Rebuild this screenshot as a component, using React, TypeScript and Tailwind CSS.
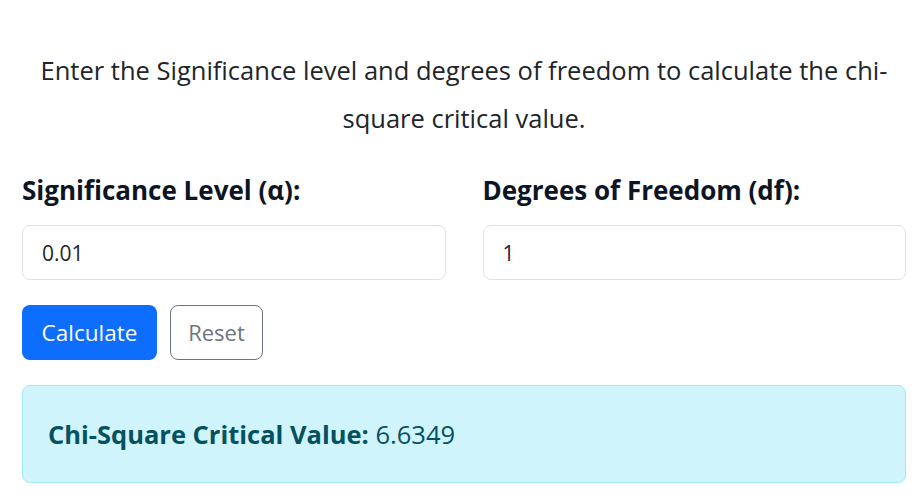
export default function App() {
  return (
    <div className="w-full min-h-[496px] bg-white pl-[22px] pr-[11px] font-['Open_Sans',sans-serif] text-[#212529]">
      <p className="pt-[46px] text-center text-[25.5px] leading-[48px]">
        Enter the Significance level and degrees of freedom to calculate the chi-
        <br />
        square critical value.
      </p>

      <div className="mt-[30px] grid grid-cols-2 gap-x-[37px]">
        <div>
          <label className="block text-[26px] font-bold leading-[36px] text-[#0d1525]">
            Significance Level (α):
          </label>
          <input
            defaultValue="0.01"
            className="mt-[17px] h-[55px] w-full rounded-[8px] border border-[#dee2e6] px-[19px] text-[21px] text-[#212529] outline-none"
          />
        </div>
        <div>
          <label className="block text-[26px] font-bold leading-[36px] text-[#0d1525]">
            Degrees of Freedom (df):
          </label>
          <input
            defaultValue="1"
            className="mt-[17px] h-[55px] w-full rounded-[8px] border border-[#dee2e6] px-[19px] text-[21px] text-[#212529] outline-none"
          />
        </div>
      </div>

      <div className="mt-[25px] flex gap-[13px]">
        <button className="h-[55px] w-[135px] rounded-[8px] bg-[#0d6efd] text-[22.5px] text-white">
          Calculate
        </button>
        <button className="h-[55px] w-[93px] rounded-[8px] border border-[#6c757d] bg-white text-[22px] text-[#6c757d]">
          Reset
        </button>
      </div>

      <div className="mt-[25px] flex h-[98px] items-center rounded-[8px] border border-[#9eeaf9] bg-[#cff4fc] px-[25px] text-[25.5px] text-[#055160]">
        <span>
          <strong className="font-bold">Chi-Square Critical Value:</strong> 6.6349
        </span>
      </div>
    </div>
  );
}
